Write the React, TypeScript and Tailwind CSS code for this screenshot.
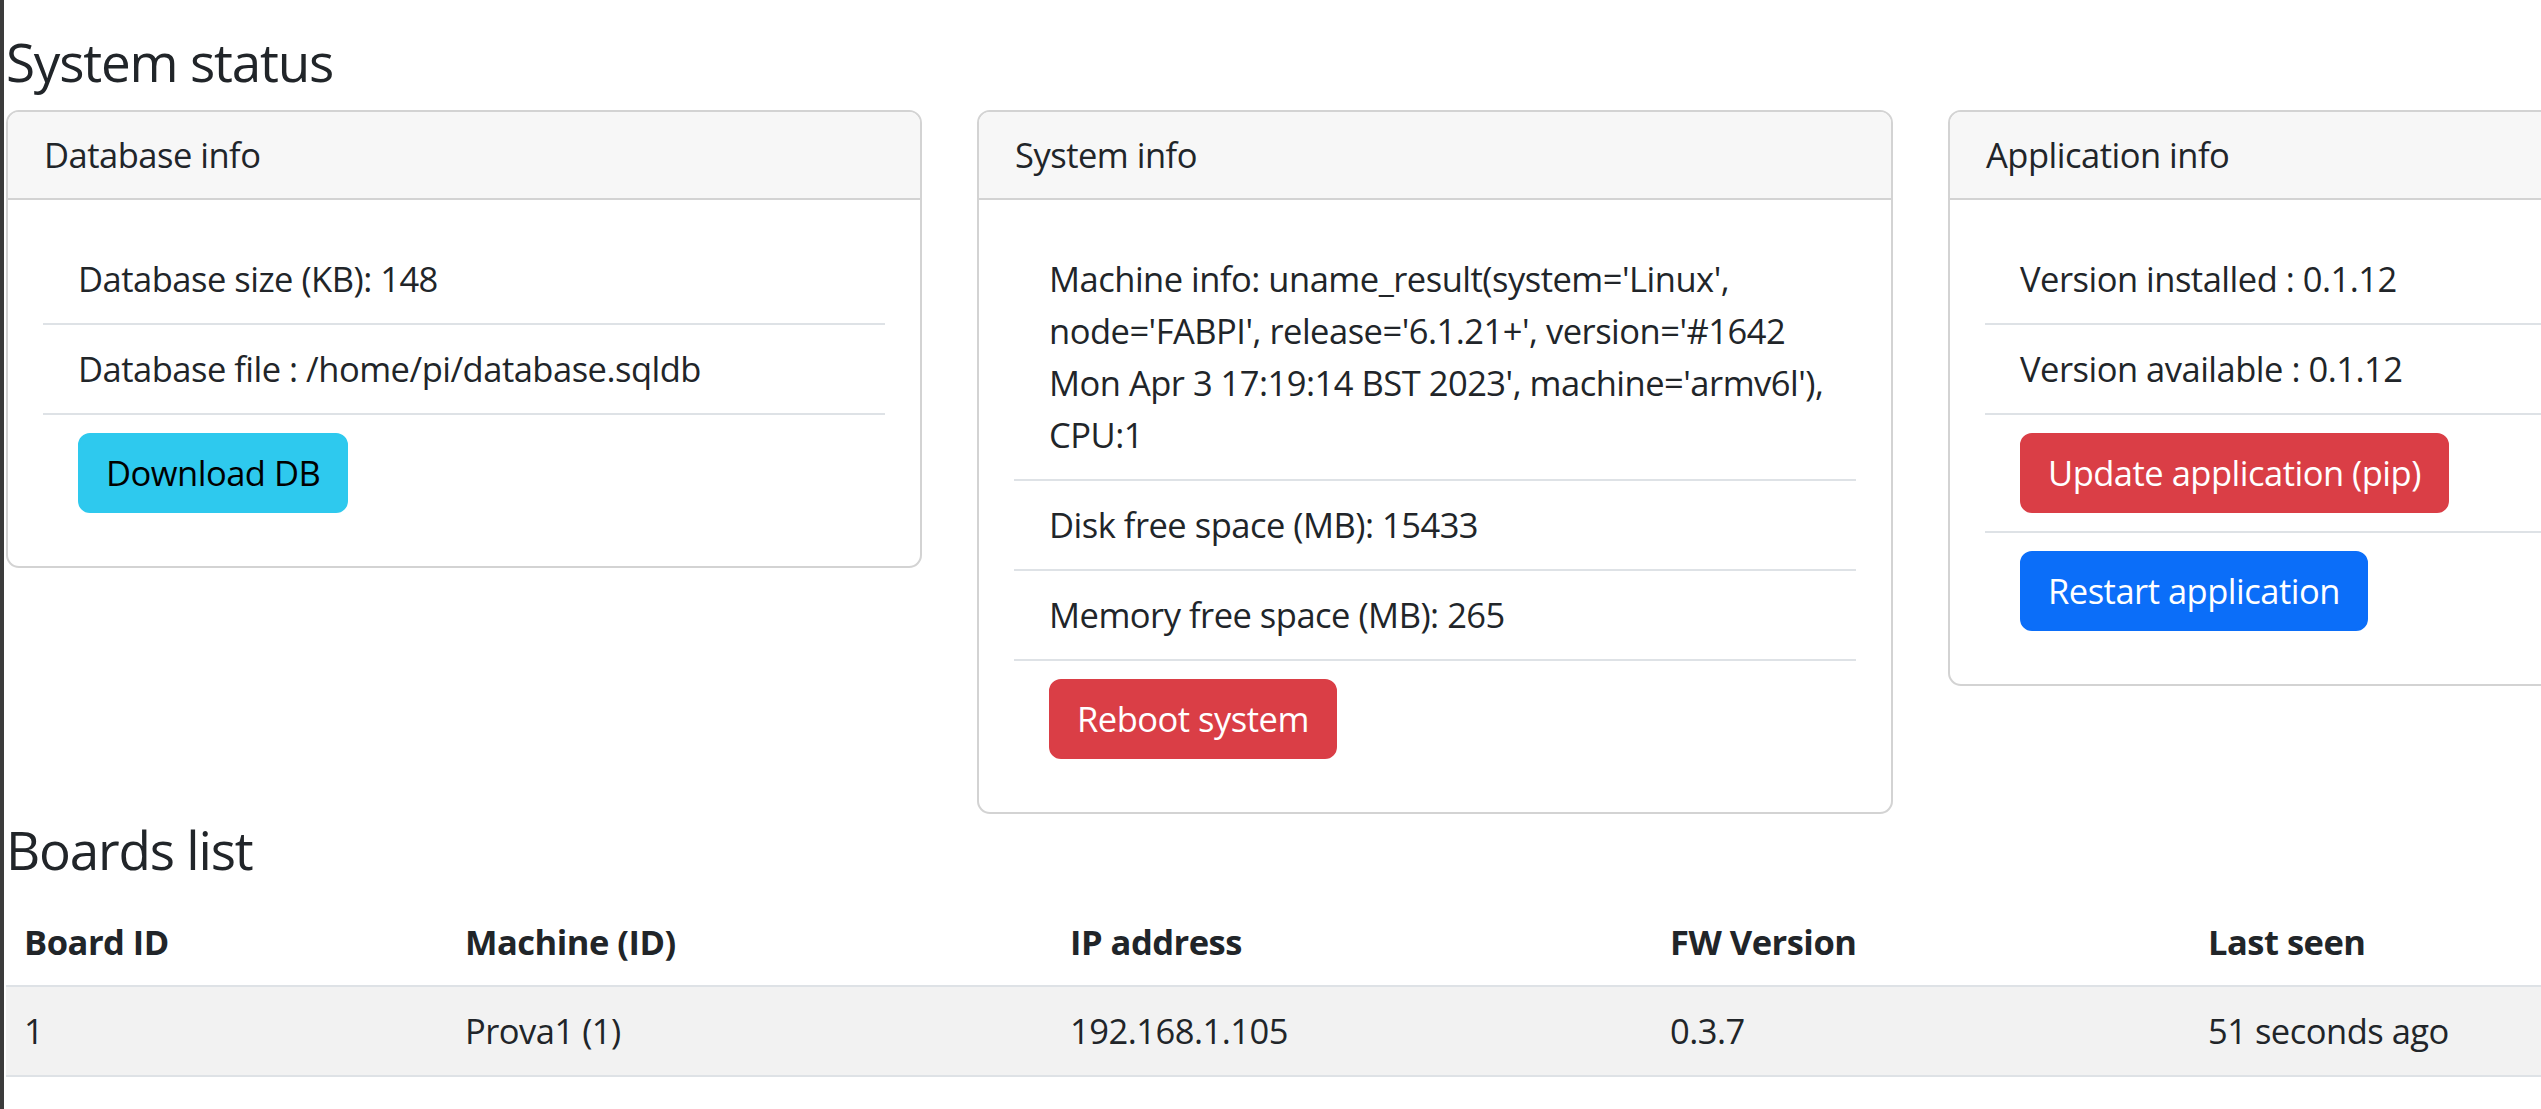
import React from "react";

type Item = { text?: React.ReactNode; nowrap?: boolean; button?: { label: string; className: string } };

const btnBase =
  "rounded-[12px] border-2 px-[26px] py-[12px] leading-[52px] text-[34.5px] whitespace-nowrap";

function InfoCard({ title, items }: { title: string; items: Item[] }) {
  return (
    <div className="w-[916px] shrink-0 overflow-hidden rounded-[13px] border-2 border-[#d3d3d3] bg-white">
      <div className="border-b-2 border-[#d3d3d3] bg-[#f7f7f7] px-[36px] py-[17px] leading-[52px]">
        {title}
      </div>
      <div className="p-[35px]">
        <ul>
          {items.map((it, i) => (
            <li
              key={i}
              className={`px-[35px] py-[18px] leading-[52px] ${it.nowrap ? "whitespace-nowrap" : ""} ${
                i < items.length - 1 ? "border-b-2 border-[#dee2e6]" : ""
              }`}
            >
              {it.button ? (
                <button className={`${btnBase} ${it.button.className}`}>{it.button.label}</button>
              ) : (
                it.text
              )}
            </li>
          ))}
        </ul>
      </div>
    </div>
  );
}

export default function App() {
  const columns = ["Board ID", "Machine (ID)", "IP address", "FW Version", "Last seen"];
  const boards = [["1", "Prova1 (1)", "192.168.1.105", "0.3.7", "51 seconds ago"]];

  return (
    <div className="flex h-[1109px] w-[2541px] overflow-hidden bg-white font-['Open_Sans','Noto_Sans',sans-serif] text-[34.5px] tracking-[-0.5px] text-[#212529]">
      <div className="w-[4px] shrink-0 bg-[#3b3b3b]" />
      <div className="w-[2913px] shrink-0 pl-[2px]">
        <h3 className="mt-[28px] mb-[14px] text-[53px] leading-[68px] font-medium tracking-[-1.2px]">
          System status
        </h3>
        <div className="flex items-start gap-[55px]">
          <InfoCard
            title="Database info"
            items={[
              { text: "Database size (KB): 148" },
              { text: "Database file : /home/pi/database.sqldb" },
              { button: { label: "Download DB", className: "border-[#2ec9ee] bg-[#2ec9ee] text-black" } },
            ]}
          />
          <InfoCard
            title="System info"
            items={[
              {
                nowrap: true,
                text: (
                  <>
                    Machine info: uname_result(system='Linux',
                    <br />
                    node='FABPI', release='6.1.21+', version='#1642
                    <br />
                    Mon Apr 3 17:19:14 BST 2023', machine='armv6l'),
                    <br />
                    CPU:1
                  </>
                ),
              },
              { text: "Disk free space (MB): 15433" },
              { text: "Memory free space (MB): 265" },
              { button: { label: "Reboot system", className: "border-[#da3e46] bg-[#da3e46] text-white" } },
            ]}
          />
          <InfoCard
            title="Application info"
            items={[
              { text: "Version installed : 0.1.12" },
              { text: "Version available : 0.1.12" },
              {
                button: {
                  label: "Update application (pip)",
                  className: "border-[#da3e46] bg-[#da3e46] text-white",
                },
              },
              { button: { label: "Restart application", className: "border-[#0b6ef9] bg-[#0b6ef9] text-white" } },
            ]}
          />
        </div>
        <h3 className="mt-[2px] mb-[15px] text-[53px] leading-[68px] font-medium tracking-[-1.2px]">
          Boards list
        </h3>
        <table className="w-[2913px] table-fixed border-collapse text-left">
          <colgroup>
            <col className="w-[441px]" />
            <col className="w-[605px]" />
            <col className="w-[600px]" />
            <col className="w-[538px]" />
            <col className="w-[729px]" />
          </colgroup>
          <thead>
            <tr className="border-b-2 border-[#dee2e6]">
              {columns.map((c) => (
                <th key={c} className="px-[18px] py-[17px] leading-[52px] font-bold">
                  {c}
                </th>
              ))}
            </tr>
          </thead>
          <tbody>
            {boards.map((row, i) => (
              <tr key={i} className="border-b-2 border-[#dee2e6] bg-[#f2f2f2]">
                {row.map((cell, j) => (
                  <td key={j} className="px-[18px] py-[18px] leading-[52px]">
                    {cell}
                  </td>
                ))}
              </tr>
            ))}
          </tbody>
        </table>
      </div>
    </div>
  );
}
